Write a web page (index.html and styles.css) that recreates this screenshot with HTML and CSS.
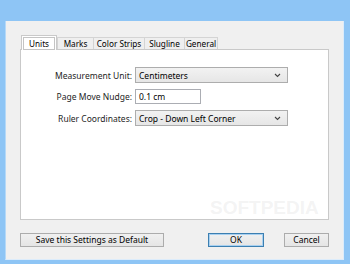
FILE: index.html
```html
<!DOCTYPE html>
<html lang="en">
<head>
    <meta charset="UTF-8">
    <title>Settings</title>
    <link rel="stylesheet" href="styles.css">
</head>
<body>
    <div class="window">
        <div class="titlebar"></div>
        <div class="client">
            <div class="tabs">
                <div class="tab active"><span class="focus">Units</span></div>
                <div class="tab t-marks">Marks</div>
                <div class="tab t-color">Color Strips</div>
                <div class="tab t-slug">Slugline</div>
                <div class="tab t-gen">General</div>
            </div>
            <div class="page">
                <div class="form">
                    <label>Measurement Unit:</label>
                    <div class="combo">
                        <span>Centimeters</span>
                        <svg class="chev" width="7" height="5" viewBox="0 0 7 5"><path d="M1 1 L3.5 3.5 L6 1" fill="none" stroke="#444" stroke-width="1.1"/></svg>
                    </div>
                    <label>Page Move Nudge:</label>
                    <div class="edit">0.1 cm</div>
                    <label>Ruler Coordinates:</label>
                    <div class="combo">
                        <span>Crop - Down Left Corner</span>
                        <svg class="chev" width="7" height="5" viewBox="0 0 7 5"><path d="M1 1 L3.5 3.5 L6 1" fill="none" stroke="#444" stroke-width="1.1"/></svg>
                    </div>
                </div>
            </div>
            <div class="buttons">
                <button class="btn wide">Save this Settings as Default</button>
                <div class="right">
                    <button class="btn default">OK</button>
                    <button class="btn">Cancel</button>
                </div>
            </div>
            <div class="watermark">SOFTPEDIA</div>
        </div>
    </div>
</body>
</html>
```

FILE: styles.css
```css
body {
    margin: 0;
    font-family: "Noto Sans", "Liberation Sans", sans-serif;
    font-size: 8.5px;
    color: #000;
    background: #8ec5f5;
}
.window {
    width: 350px;
    height: 264px;
    display: flex;
    flex-direction: column;
}
.titlebar {
    height: 21px;
    background: #8ec5f5;
}
.client {
    position: relative;
    overflow: hidden;
    height: 239px;
    margin: 0 6px 0 5px;
    padding: 14px 14px 13px 14px;
    box-sizing: border-box;
    background: #f0f0f0;
    border-left: 1px solid #b5d9f8;
    border-right: 1px solid #dcecfb;
    border-bottom: 1px solid #dcecfb;
}
.tabs {
    display: flex;
    height: 14px;
    align-items: flex-end;
    padding-left: 1px;
    position: relative;
    z-index: 1;
}
.tab {
    height: 12px;
    line-height: 11px;
    font-size: 8.2px;
    text-align: center;
    border: 1px solid #d4d4d4;
    border-bottom: none;
    background: #efefef;
    box-sizing: border-box;
    margin-right: -1px;
    white-space: nowrap;
}
.t-marks { width: 37px; }
.t-color { width: 52px; }
.t-slug { width: 41px; }
.t-gen { width: 34px; }
.tab.active {
    width: 36px;
    height: 15px;
    margin-bottom: -1px;
    background: #fff;
    border-color: #c9c9c9;
    padding: 1px 1px 0 1px;
    margin-right: 0;
}
.focus {
    display: block;
    line-height: 11px;
    border: 1px solid #c4c4c4;
}
.page {
    height: 171px;
    box-sizing: border-box;
    background: #fff;
    border: 1px solid #c9c9c9;
    padding-top: 17px;
}
.form {
    display: grid;
    grid-template-columns: 111px auto;
    column-gap: 3px;
    row-gap: 6px;
    align-items: center;
}
.form label {
    text-align: right;
    color: #1e1e1e;
}
.combo {
    width: 153px;
    height: 16px;
    box-sizing: border-box;
    border: 1px solid #adadad;
    background: linear-gradient(#f2f2f2, #e6e6e6);
    display: flex;
    align-items: center;
    justify-content: space-between;
    padding: 0 6px 0 3px;
}
.edit {
    width: 66px;
    height: 15px;
    box-sizing: border-box;
    border: 1px solid #abadb3;
    background: #fff;
    line-height: 13px;
    padding-left: 3px;
}
.chev {
    display: block;
}
.buttons {
    display: flex;
    justify-content: space-between;
    margin-top: 13px;
}
.right {
    display: flex;
    gap: 20px;
}
.btn {
    font-family: inherit;
    font-size: 8.5px;
    height: 14px;
    padding: 0;
    line-height: 12px;
    border: 1px solid #acacac;
    background: linear-gradient(#f0f0f0, #e5e5e5);
    color: #000;
    width: 45px;
}
.btn.wide {
    width: 144px;
}
.btn.default {
    width: 56px;
    border-color: #3c7fb1;
    box-shadow: inset 0 0 0 1px #a8d0f0;
}
.watermark {
    position: absolute;
    left: 204px;
    top: 176px;
    font-family: "Liberation Sans", sans-serif;
    font-size: 19px;
    font-weight: bold;
    color: rgba(190, 190, 190, 0.18);
    pointer-events: none;
    white-space: nowrap;
}
```
